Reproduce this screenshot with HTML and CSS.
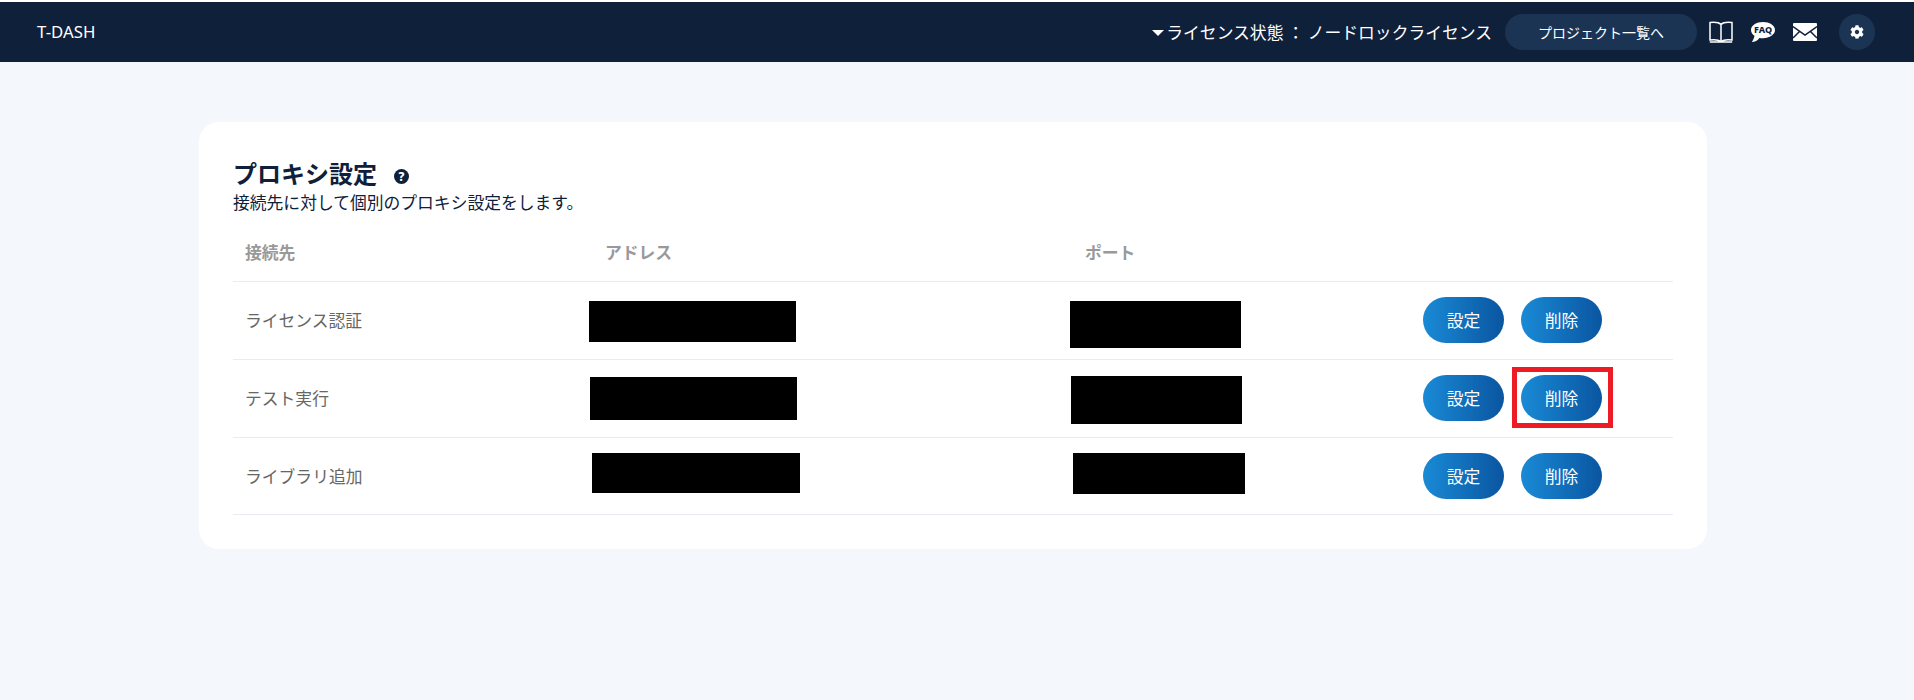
FILE: index.html
```html
<!DOCTYPE html>
<html lang="ja">
<head>
<meta charset="utf-8">
<title>T-DASH</title>
<link rel="stylesheet" href="styles.css">
</head>
<body>
<header class="topbar">
  <div class="brand">T-DASH</div>
  <div class="top-right">
    <div class="license"><span class="caret"></span><span>ライセンス状態 ： ノードロックライセンス</span></div>
    <a class="project-btn">プロジェクト一覧へ</a>
    <svg class="ico book" width="24" height="22" viewBox="0 0 24 22"><path d="M12 3.500C10 1.600 6 1 1 1.600V19c5-.6 9 0 11 1.600C14 19 18 18.400 23 19V1.600C18 1 14 1.600 12 3.500ZM12 3.500V20.600M.8 21h22.400" fill="none" stroke="#fff" stroke-width="1.500"/></svg>
    <svg class="ico faq" width="24" height="20" viewBox="0 0 24 20"><path d="M12 0C5.400 0 0 3.400 0 8c0 2.400 1.400 4.400 3.500 5.800C3.300 15.800 2.300 18 .8 20c3 0 6-1.600 7.600-4 1.100.2 2.400.2 3.600.2 6.600 0 12-3.600 12-8.200S18.600 0 12 0Z" fill="#fff"/><text x="12" y="11.300" class="faq-text" text-anchor="middle">FAQ</text></svg>
    <svg class="ico mail" width="24" height="18" viewBox="0 0 24 18"><rect width="24" height="18" rx="1" fill="#fff"/><path d="M0 3.500 12 12 24 3.500M0 15l7-7M24 15l-7-7" fill="none" stroke="#0f203a" stroke-width="1.500"/></svg>
    <button class="gear-btn" aria-label="設定">
      <svg width="14" height="14" viewBox="0 0 512 512"><path fill="#fff" d="M487.400 315.700l-42.600-24.600c4.300-23.200 4.300-47 0-70.200l42.600-24.600c4.900-2.800 7.100-8.600 5.500-14-11.100-35.600-30-67.800-54.700-94.600-3.800-4.100-10-5.100-14.800-2.300L380.800 110c-17.900-15.400-38.500-27.300-60.800-35.100V25.800c0-5.600-3.900-10.500-9.400-11.700-36.700-8.200-74.300-7.800-109.200 0-5.500 1.200-9.400 6.100-9.400 11.700V75c-22.200 7.900-42.800 19.800-60.800 35.100L88.700 85.500c-4.900-2.800-11-1.900-14.800 2.300-24.700 26.700-43.600 58.900-54.700 94.600-1.700 5.400.6 11.200 5.500 14L67.300 221c-4.300 23.200-4.300 47 0 70.200l-42.600 24.600c-4.900 2.800-7.100 8.600-5.500 14 11.100 35.600 30 67.800 54.700 94.600 3.800 4.100 10 5.100 14.800 2.300l42.600-24.600c17.900 15.400 38.500 27.300 60.800 35.100v49.200c0 5.600 3.900 10.500 9.400 11.700 36.700 8.200 74.300 7.800 109.200 0 5.500-1.200 9.400-6.100 9.400-11.700v-49.200c22.200-7.900 42.800-19.800 60.800-35.100l42.600 24.600c4.900 2.800 11 1.900 14.800-2.300 24.700-26.700 43.600-58.900 54.700-94.600 1.500-5.500-.7-11.300-5.600-14.100zM256 336c-44.100 0-80-35.900-80-80s35.900-80 80-80 80 35.900 80 80-35.900 80-80 80z"/></svg>
    </button>
  </div>
</header>
<main class="page">
  <section class="card">
    <h1 class="title">プロキシ設定<span class="help">?</span></h1>
    <p class="lead">接続先に対して個別のプロキシ設定をします。</p>
    <div class="row head">
      <div>接続先</div><div>アドレス</div><div>ポート</div><div></div>
    </div>
    <div class="row">
      <div>ライセンス認証</div><div></div><div></div>
      <div class="actions"><button class="pill">設定</button><button class="pill">削除</button></div>
      <div class="mask a1"></div><div class="mask p1"></div>
    </div>
    <div class="row">
      <div>テスト実行</div><div></div><div></div>
      <div class="actions"><button class="pill">設定</button><span class="marked"><button class="pill">削除</button><span class="red-box"></span></span></div>
      <div class="mask a2"></div><div class="mask p2"></div>
    </div>
    <div class="row last">
      <div>ライブラリ追加</div><div></div><div></div>
      <div class="actions"><button class="pill">設定</button><button class="pill">削除</button></div>
      <div class="mask a3"></div><div class="mask p3"></div>
    </div>
  </section>
</main>
</body>
</html>
```
FILE: styles.css
```css
* { box-sizing: border-box; }
html, body { margin: 0; height: 100%; }
body {
  background: #f4f8fd;
  border-top: 2px solid #fff;
  color: #0f203a;
  font-family: "Noto Sans CJK JP", "Noto Sans", sans-serif;
  font-size: 16.8px;
  overflow: hidden;
}
.topbar {
  height: 60px;
  background: #0f203a;
  color: #fff;
  display: flex;
  align-items: center;
  justify-content: space-between;
  padding: 0 39px 0 37px;
}
.brand { font-family: "Noto Sans", sans-serif; line-height: 62px; }
.top-right { display: flex; align-items: center; }
.license { display: flex; align-items: center; margin-right: 13px; line-height: 24px; }
.caret {
  width: 0; height: 0;
  margin-right: 2px;
  margin-top: 2px;
  border-left: 6px solid transparent;
  border-right: 6px solid transparent;
  border-top: 6px solid #fff;
}
.project-btn {
  width: 192px; height: 36px;
  border-radius: 18px;
  background: #1c3454;
  display: flex; align-items: center; justify-content: center;
  font-size: 14px;
}
.ico { display: block; flex: none; }
.book { margin-left: 12px; }
.faq { margin-left: 18px; }
.faq-text { font: 800 9px "Noto Sans", sans-serif; fill: #0f203a; }
.mail { margin-left: 18px; }
.gear-btn {
  margin-left: 22px;
  width: 36px; height: 36px;
  border: 0; padding: 0;
  border-radius: 50%;
  background: #1c3454;
  display: flex; align-items: center; justify-content: center;
}
.page { padding: 60px 207px 0 199px; }
.card {
  background: #fff;
  border-radius: 20px;
  padding: 33px 34px 34px;
}
.title {
  margin: 0;
  font-size: 24px;
  line-height: 36px;
  font-weight: 700;
  display: flex;
  align-items: center;
}
.help {
  margin: 7px 0 0 17px;
  width: 15px; height: 15px;
  border-radius: 50%;
  background: #0f203a;
  color: #fff;
  font: 800 12px/15px "Noto Sans", sans-serif;
  text-align: center;
}
.lead { margin: 0; line-height: 22px; }
.row {
  position: relative;
  display: grid;
  grid-template-columns: 360px 480px 338px 1fr;
  align-items: center;
  height: 78px;
  padding: 0 0 1px 12px;
  border-bottom: 1px solid #e9ecf2;
  color: #666;
  line-height: 24px;
}
.row.head {
  height: 69px;
  align-items: end;
  padding-bottom: 17px;
  color: #999;
  font-weight: 700;
}
.row.last { height: 77px; }
.actions { display: flex; gap: 17px; }
.pill {
  width: 81px; height: 46px;
  border: 0; padding: 0 0 0 0;
  border-radius: 23px;
  background: linear-gradient(90deg, #1a8ad6, #0a55a0);
  color: #fff;
  font: 400 16.8px "Noto Sans CJK JP", sans-serif;
}
.marked { position: relative; display: block; height: 46px; }
.red-box {
  position: absolute;
  left: -9px; top: -8px;
  width: 101px; height: 61px;
  border: 5px solid #ed1c24;
}
.mask { position: absolute; background: #000; }
.a1 { left: 356px; top: 19px; width: 207px; height: 41px; }
.p1 { left: 837px; top: 19px; width: 171px; height: 47px; }
.a2 { left: 357px; top: 17px; width: 207px; height: 43px; }
.p2 { left: 838px; top: 16px; width: 171px; height: 48px; }
.a3 { left: 359px; top: 15px; width: 208px; height: 40px; }
.p3 { left: 840px; top: 15px; width: 172px; height: 41px; }
```
